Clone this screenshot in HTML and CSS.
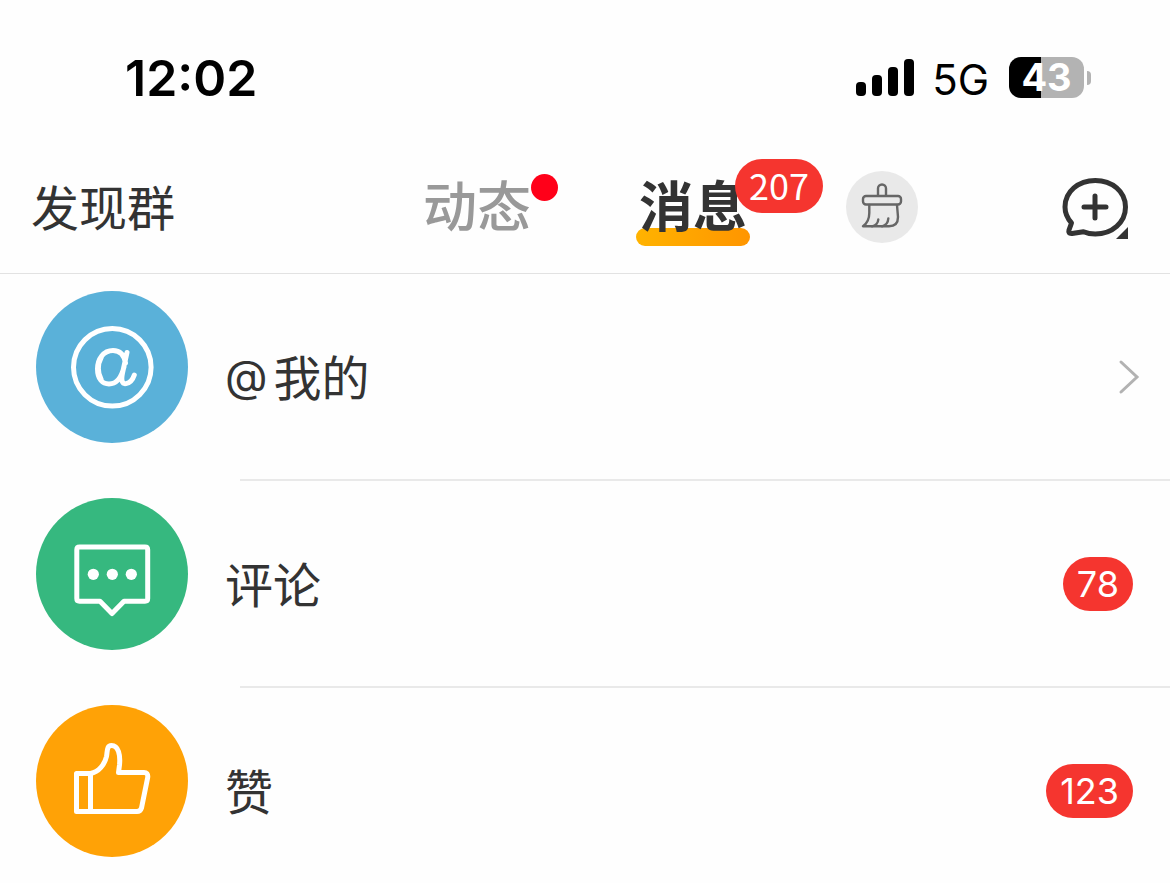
FILE: index.html
```html
<!DOCTYPE html>
<html lang="zh-CN">
    <head>
        <meta charset="UTF-8">
        <meta name="viewport" content="width=device-width, initial-scale=1">
        <title>消息</title>
        <link rel="stylesheet" href="styles.css">
    </head>
    <body>
        <div class="status">
            <span class="time">12:02</span>
            <div class="status-right">
                <div class="signal"><i class="s1"></i><i class="s2"></i><i class="s3"></i><i class="s4"></i></div>
                <span class="net">5G</span>
                <div class="battery"><span class="level">43</span><i class="cap"></i></div>
            </div>
        </div>
        <header class="nav">
            <a class="find" href="#">发现群</a>
            <nav class="tabs">
                <a class="tab" href="#">动态<i class="dot"></i></a>
                <a class="tab active" href="#">消息<span class="badge tab-badge">207</span></a>
            </nav>
            <div class="tools">
                <button class="clean" type="button" aria-label="清除未读">
                    <svg width="72" height="72" viewBox="0 0 72 72" fill="none" stroke="#666" stroke-width="2.4" stroke-linecap="round" stroke-linejoin="round">
                        <path d="M32 24.5V17.500a4 4 0 0 1 8 0V24.5"/>
                        <rect x="17" y="25" width="38" height="8.5" rx="3"/>
                        <path d="M23.3 34V42C23.3 48 21.5 52 17 55.3H43C49 55.3 52 52 52 46L51 34"/>
                        <path d="M32.3 48.5C32 52 29.5 54.5 26 55.3M42.3 47.5C42 52 39.5 54.5 36 55.3"/>
                    </svg>
                </button>
                <button class="add" type="button" aria-label="添加">
                    <svg width="68" height="64" viewBox="0 0 68 64" fill="none" stroke="#333" stroke-width="5" stroke-linecap="round" stroke-linejoin="round">
                        <path d="M9.5 45C5.5 40.5 3 35 3 29C3 13.5 16.5 2.500 33.3 2.500C50 2.500 63.5 13.5 63.5 29C63.5 44.5 50 56 33.3 56C29 56 25 55.2 21.5 53.7L10 55.5C7 55.8 6.3 54.5 7 52Z"/>
                        <path d="M22 29H44M33 18V40"/>
                        <path d="M66 49V61H54Z" fill="#333" stroke="none"/>
                    </svg>
                </button>
            </div>
        </header>
        <ul class="list">
            <li>
                <a class="row" href="#">
                    <svg class="icon at" viewBox="0 0 152 152">
                        <circle cx="76.3" cy="76.3" r="38.8"/>
                        <path d="M89.5 72C88 63 83.5 59.5 77 59.5C67.5 59.5 61.5 68 61.5 78C61.5 88 66.5 93 73 93C81 93 85.5 86 88 76M91 61.5L86.5 82C84.8 90.5 86.5 93.2 90 92.6C94 92 96.8 88.5 98.3 84"/>
                        <path d="M65 67C61.5 73 61.5 82 65 88"/>
                    </svg>
                    <span class="label"><span class="at-sign">@</span>我的</span>
                    <svg class="arrow" width="22" height="38" viewBox="0 0 22 38"><path d="M3 4L19 19L3 34"/></svg>
                </a>
            </li>
            <li>
                <a class="row" href="#">
                    <svg class="icon comment" viewBox="0 0 152 152">
                        <path d="M43.5 49H109Q111.7 49 111.7 51.7V100.5Q111.7 103.2 109 103.2H88L76 115.5L64 103.2H43.5Q40.8 103.2 40.8 100.5V51.7Q40.8 49 43.5 49Z"/>
                        <g fill="#fff" stroke="none">
                            <circle cx="57.3" cy="76.3" r="5.6"/>
                            <circle cx="76.3" cy="76.3" r="5.6"/>
                            <circle cx="95.3" cy="76.3" r="5.6"/>
                        </g>
                    </svg>
                    <span class="label">评论</span>
                    <span class="badge count">78</span>
                </a>
            </li>
            <li>
                <a class="row" href="#">
                    <svg class="icon like" viewBox="0 0 152 152">
                        <path d="M54.5 68.5H40.5V106.5H101C103.5 106.5 104.7 105.5 105.5 103L111.7 72.5C112.2 69 110.5 67.5 108 67.5H82.5L83.5 60C84.5 50 82.5 40.5 75.5 40.5C70.5 40.5 71.5 46.5 70.5 51.5C68.5 59.5 63 67 54.5 68.5V106.5"/>
                    </svg>
                    <span class="label">赞</span>
                    <span class="badge count">123</span>
                </a>
            </li>
        </ul>
    </body>
</html>
```

FILE: styles.css
```css
*{
    box-sizing: border-box;
    margin: 0;
    padding: 0;
}
body{
    height: 100vh;
    overflow: hidden;
    background-color: #fefefe;
    color: #333;
    font-family: "Noto Sans CJK SC", sans-serif;
    font-size: 48px;
}
a{
    color: inherit;
    text-decoration: none;
}
button{
    border: none;
    background: none;
    cursor: pointer;
}
svg{
    display: block;
}

/* status bar */
.status{
    display: flex;
    justify-content: space-between;
    align-items: center;
    height: 140px;
    padding: 15px 79px 0 125px;
    color: #000;
    font-family: Inter, sans-serif;
}
.time{
    font-size: 50px;
    font-weight: 600;
}
.status-right{
    display: flex;
    align-items: center;
}
.signal{
    display: flex;
    align-items: flex-end;
    gap: 6px;
}
.signal i{
    width: 10px;
    border-radius: 4px;
    background-color: #000;
}
.s1{
    height: 14px;
}
.s2{
    height: 21px;
}
.s3{
    height: 29px;
}
.s4{
    height: 37px;
}
.net{
    margin: 4px 20px 0 18px;
    font-size: 42px;
    line-height: 50px;
}
.battery{
    display: flex;
    align-items: center;
    gap: 3px;
}
.level{
    width: 75px;
    height: 41px;
    border-radius: 12px;
    background: linear-gradient(to right, #000 43%, #b3b3b3 43%);
    color: #fff;
    font-size: 38px;
    font-weight: 700;
    line-height: 41px;
    text-align: center;
}
.cap{
    width: 4px;
    height: 14px;
    border-radius: 0 4px 4px 0;
    background-color: #b3b3b3;
}

/* top nav */
.nav{
    display: grid;
    grid-template-columns: 1fr auto 1fr;
    align-items: center;
    height: 134px;
    padding: 0 31px;
    border-bottom: 1px solid #e2e2e2;
}
.find{
    padding-bottom: 4px;
}
.tabs{
    display: flex;
    gap: 108px;
}
.tab{
    position: relative;
    padding-bottom: 6px;
    color: #999;
    font-size: 54px;
    font-weight: 500;
    line-height: 72px;
}
.active{
    z-index: 0;
    color: #333;
    font-weight: 700;
}
.active::before{
    content: "";
    position: absolute;
    z-index: -1;
    left: -3px;
    right: -3px;
    bottom: 0;
    height: 18px;
    border-radius: 9px;
    background: linear-gradient(to right, #ffb300, #ff9500);
}
.dot{
    position: absolute;
    top: 6px;
    left: 108px;
    width: 27px;
    height: 27px;
    border-radius: 50%;
    background-color: #ff0019;
}
.badge{
    height: 54px;
    padding: 0 14px;
    border-radius: 27px;
    background-color: #f5352f;
    color: #fff;
    font-size: 36px;
    font-weight: 400;
    line-height: 54px;
}
.tab-badge{
    position: absolute;
    top: -9px;
    left: 96px;
    padding-bottom: 4px;
    line-height: 50px;
}
.tools{
    display: flex;
    justify-content: space-between;
    align-items: center;
    padding: 0 9px 0 99px;
}
.clean{
    border-radius: 50%;
    background-color: #e9e9e9;
}
.add{
    padding-top: 6px;
}

/* message list */
.list{
    list-style: none;
}
.list li::after{
    content: "";
    display: block;
    height: 2px;
    margin-left: 240px;
    background-color: #e9e9e9;
}
.row{
    display: flex;
    align-items: center;
    height: 205px;
    padding: 0 37px 0 36px;
}
.icon{
    align-self: flex-start;
    width: 152px;
    height: 152px;
    margin-top: 17px;
    border-radius: 50%;
    fill: none;
    stroke: #fff;
    stroke-width: 5;
    stroke-linecap: round;
    stroke-linejoin: round;
}
.at{
    background-color: #5ab1d9;
}
.comment{
    background-color: #36b87f;
}
.like{
    background-color: #ffa206;
}
.label{
    flex: 1;
    margin-left: 37px;
    padding-bottom: 4px;
    line-height: 72px;
}
.at-sign{
    margin-right: 6px;
    font-family: Inter, sans-serif;
    font-size: 44px;
    line-height: 1;
    vertical-align: 4px;
}
.arrow{
    margin-right: -7px;
    fill: none;
    stroke: #b2b2b2;
    stroke-width: 3;
    stroke-linecap: round;
}
.count{
    font-family: Inter, sans-serif;
}
```
